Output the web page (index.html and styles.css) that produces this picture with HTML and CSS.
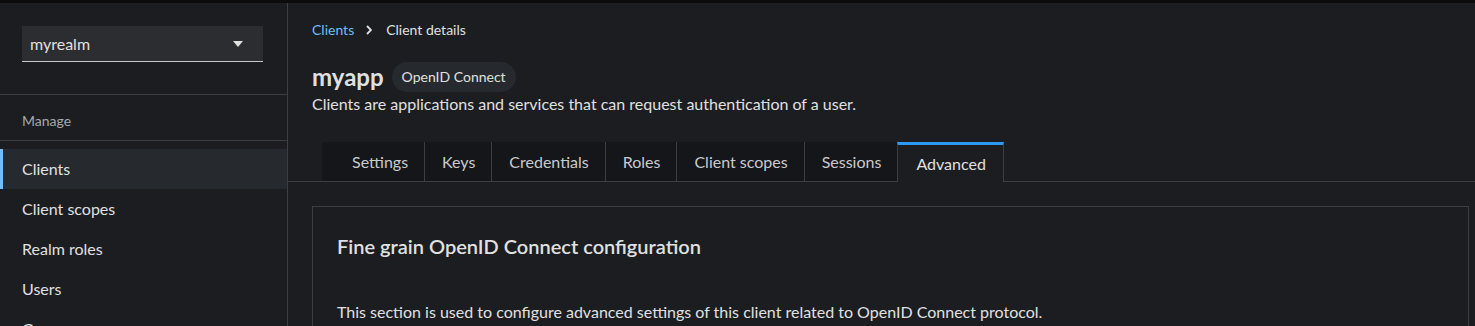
FILE: index.html
```html
<!DOCTYPE html>
<html lang="en">
<head>
    <meta charset="UTF-8">
    <title>Keycloak - Client details</title>
    <link rel="stylesheet" href="styles.css">
</head>
<body>
    <div class="top-strip"></div>
    <div class="layout">
        <!-- Боковое меню -->
        <aside class="sidebar">
            <div class="realm-section">
                <div class="realm-select">
                    <span>myrealm</span>
                    <svg class="caret" width="10" height="6" viewBox="0 0 10 6"><path d="M0 0 H10 L5 6 Z" fill="#e0e0e0"/></svg>
                </div>
            </div>
            <div class="nav-title">Manage</div>
            <ul class="nav-list">
                <li class="nav-item active">Clients</li>
                <li class="nav-item">Client scopes</li>
                <li class="nav-item">Realm roles</li>
                <li class="nav-item">Users</li>
                <li class="nav-item">Groups</li>
            </ul>
        </aside>

        <!-- Основная часть -->
        <main class="main">
            <div class="page-header">
                <nav class="breadcrumb">
                    <a class="crumb-link">Clients</a>
                    <svg class="crumb-sep" width="6" height="10" viewBox="0 0 6 10"><path d="M1 1 L5 5 L1 9" stroke="#e0e0e0" stroke-width="1.8" fill="none"/></svg>
                    <span class="crumb-current">Client details</span>
                </nav>
                <div class="title-row">
                    <h1 class="title">myapp</h1>
                    <span class="badge">OpenID Connect</span>
                </div>
                <p class="subtitle">Clients are applications and services that can request authentication of a user.</p>
            </div>

            <div class="tabs">
                <div class="tab tab-first">Settings</div>
                <div class="tab">Keys</div>
                <div class="tab">Credentials</div>
                <div class="tab">Roles</div>
                <div class="tab">Client scopes</div>
                <div class="tab">Sessions</div>
                <div class="tab tab-active">Advanced</div>
            </div>

            <section class="card">
                <h2 class="card-title">Fine grain OpenID Connect configuration</h2>
                <p class="card-text">This section is used to configure advanced settings of this client related to OpenID Connect protocol.</p>
            </section>
        </main>
    </div>
</body>
</html>
```

FILE: styles.css
```css
:root {
    --bg-color: #1b1d21;
    --bg-dark: #151619;
    --bg-light: #26292d;
    --border-color: #3c3f42;
    --text-color: #e0e0e0;
    --muted-color: #a8aaad;
    --link-color: #73bcf7;
    --accent-blue: #2b9af3;
}

* {
    margin: 0;
    padding: 0;
    box-sizing: border-box;
}

body {
    font-family: 'Lato', sans-serif;
    background: var(--bg-color);
    color: var(--text-color);
    height: 326px;
    overflow: hidden;
}

.top-strip {
    height: 3px;
    background: #0c0c0d;
}

.layout {
    display: grid;
    grid-template-columns: 288px 1fr;
}

/* Боковое меню */
.sidebar {
    border-right: 1px solid var(--border-color);
    height: 323px;
}

.realm-section {
    padding: 23px 24px 32px 22px;
    border-bottom: 1px solid var(--border-color);
}

.realm-select {
    display: flex;
    justify-content: space-between;
    align-items: center;
    height: 36px;
    padding: 0 20px 0 8px;
    background: #2c2d31;
    border-bottom: 1px solid #c7c7c7;
    font-size: 16px;
}

.nav-title {
    padding: 15px 22px 9px;
    font-size: 14px;
    line-height: 21px;
    color: var(--muted-color);
    border-bottom: 1px solid var(--border-color);
}

.nav-list {
    list-style: none;
    margin-top: 8px;
}

.nav-item {
    height: 40px;
    line-height: 40px;
    padding-left: 22px;
    font-size: 16px;
}

.nav-item.active {
    background: var(--bg-light);
    box-shadow: inset 3px 0 0 var(--link-color);
}

/* Основная часть */
.page-header {
    padding: 16px 24px 0;
}

.breadcrumb {
    display: flex;
    align-items: center;
    font-size: 14px;
    line-height: 21px;
}

.crumb-link {
    color: var(--link-color);
}

.crumb-sep {
    margin: 0 14px 0 12px;
}

.title-row {
    display: flex;
    align-items: center;
    gap: 8px;
    margin-top: 22px;
}

.title {
    font-size: 24px;
    font-weight: 700;
    line-height: 30px;
}

.badge {
    display: inline-block;
    height: 30px;
    line-height: 30px;
    padding: 0 10px;
    border-radius: 15px;
    background: var(--bg-light);
    font-size: 14px;
}

.subtitle {
    font-size: 16px;
    line-height: 24px;
}

/* Вкладки */
.tabs {
    display: flex;
    margin-top: 26px;
    padding-left: 34px;
    border-bottom: 1px solid var(--border-color);
    height: 40px;
}

.tab {
    padding: 0 16px 0 17px;
    line-height: 39px;
    font-size: 16px;
    color: #c9cacc;
    background: var(--bg-dark);
    border-right: 1px solid var(--border-color);
}

.tab-first {
    padding-left: 30px;
}

.tab:nth-child(6) {
    border-right: none;
}

.tab-active {
    padding: 0 17px 0 18px;
    color: var(--text-color);
    background: var(--bg-color);
    border-left: 1px solid var(--border-color);
    border-top: 3px solid var(--accent-blue);
    line-height: 37px;
    height: 40px;
}

/* Карточка */
.card {
    margin: 24px 6px 0 24px;
    border: 1px solid var(--border-color);
    padding: 24px 24px 0;
    height: 200px;
}

.card-title {
    font-size: 20px;
    font-weight: 600;
    line-height: 30px;
}

.card-text {
    margin-top: 39px;
    font-size: 16px;
    line-height: 24px;
}
```
